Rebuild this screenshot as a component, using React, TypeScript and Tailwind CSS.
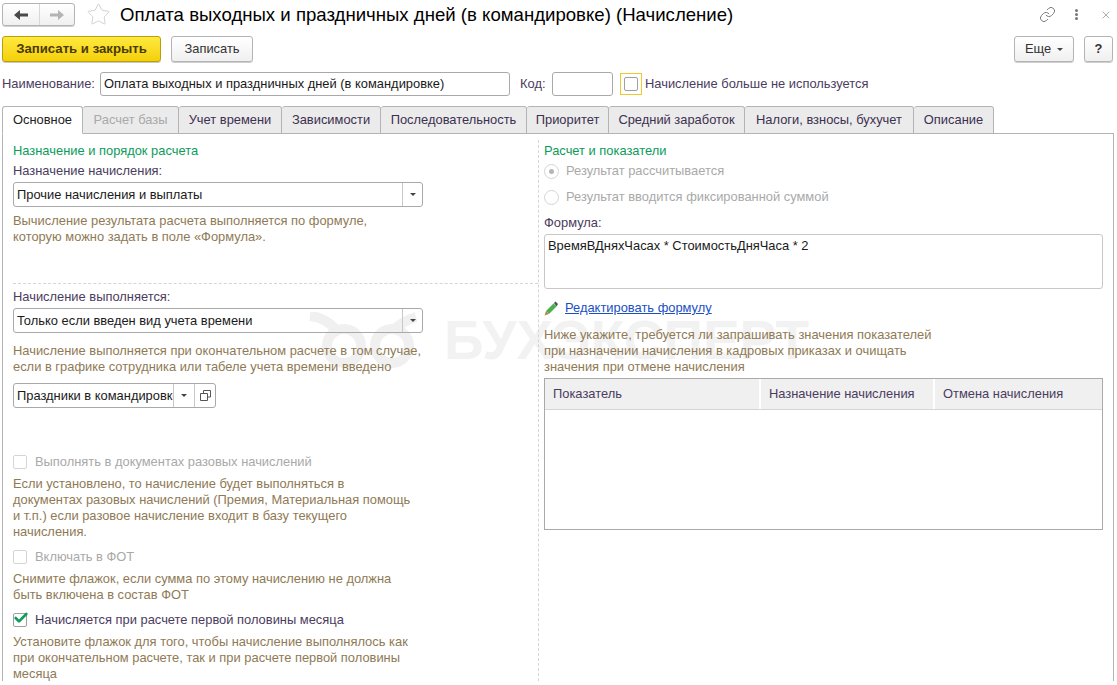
import { Check, Star, Link, X } from "lucide-react";

const tabs = [
  { name: "Основное", width: "w-[81px]", active: true },
  { name: "Расчет базы", width: "w-[96px]", disabled: true },
  { name: "Учет времени", width: "w-[103px]" },
  { name: "Зависимости", width: "w-[99px]" },
  { name: "Последовательность", width: "w-[146px]" },
  { name: "Приоритет", width: "w-[82px]" },
  { name: "Средний заработок", width: "w-[136px]" },
  { name: "Налоги, взносы, бухучет", width: "w-[169px]" },
  { name: "Описание", width: "w-[80px]" },
];

function Caret() {
  return <span className="block h-0 w-0 border-x-[3px] border-t-[3px] border-x-transparent border-t-[#444]" />;
}

function Hint({ children, className = "" }: { children: React.ReactNode; className?: string }) {
  return <p className={`leading-[16px] text-[#8f7a55] ${className}`}>{children}</p>;
}

function Label({ children, className = "" }: { children: React.ReactNode; className?: string }) {
  return <div className={`leading-[16px] text-[#4b3c5e] ${className}`}>{children}</div>;
}

function Select({ value, className = "" }: { value: string; className?: string }) {
  return (
    <div className={`flex h-[25px] w-[410px] items-center rounded-[3px] border border-[#a9a9a9] ${className}`}>
      <span className="flex-1 pl-[3px] text-[#1a1a1a]">{value}</span>
      <span className="flex h-full w-[20px] items-center justify-center border-l border-[#c8c8c8]">
        <Caret />
      </span>
    </div>
  );
}

function Checkbox({ disabled, checked, label, className = "" }: { disabled?: boolean; checked?: boolean; label: string; className?: string }) {
  return (
    <div className={`flex h-[16px] items-center ${className}`}>
      <span className={`relative mr-[8px] block h-[14px] w-[14px] rounded-[2px] border ${disabled ? "border-[#d5d5d5]" : "border-[#a0a0a0]"}`}>
        {checked && <Check className="absolute left-[-1px] top-[-4px] h-[16px] w-[16px] text-[#0f9d58]" strokeWidth={4} />}
      </span>
      <span className={disabled ? "text-[#a9a9a9]" : "text-[#4b3c5e]"}>{label}</span>
    </div>
  );
}

function Radio({ selected, label, className = "" }: { selected?: boolean; label: string; className?: string }) {
  return (
    <div className={`flex h-[16px] items-center ${className}`}>
      <span className="mr-[7px] flex h-[15px] w-[15px] items-center justify-center rounded-full border border-[#d5d5d5]">
        {selected && <span className="block h-[5px] w-[5px] rounded-full bg-[#b5b5b5]" />}
      </span>
      <span className="text-[#a9a9a9]">{label}</span>
    </div>
  );
}

const buttonClass =
  "flex h-[26px] items-center justify-center rounded-[3px] border border-[#b4b4b4] bg-gradient-to-b from-white to-[#f0f0f0] text-[#333] shadow-[0_1px_0_#d0d0d0]";

export default function App() {
  return (
    <div className="relative h-[685px] w-[1117px] overflow-hidden bg-white font-['Liberation_Sans',Arial,sans-serif] text-[12.9px]">
      {/* Watermark, sits under the form */}
      <div className="pointer-events-none absolute left-[308px] top-[312px] flex items-center text-[55px] font-bold leading-none text-[#f2f2f2]">
        <svg width="136" height="56" viewBox="0 0 136 56" fill="none" stroke="#f0f0f0" strokeWidth="10">
          <path d="M2 4c12 1 20 6 28 16M84 20c6-7 14-12 24-15" />
          <circle cx="36" cy="34" r="17" />
          <circle cx="84" cy="34" r="17" />
        </svg>
        <span>БУХЭКСПЕРТ</span>
      </div>

      {/* Title */}
      <div className="relative flex h-[27px] items-center pl-[2px] pt-[2px]">
        <div className="flex h-[23px] w-[73px] rounded-[3px] border border-[#b4b4b4] bg-gradient-to-b from-white to-[#f0f0f0] shadow-[0_1px_0_#d0d0d0]">
          <span className="flex w-[37px] items-center justify-center border-r border-[#d8d8d8]">
            <svg width="14" height="10" viewBox="0 0 14 10" fill="#4a4a4a">
              <path d="M0 5l6-5v3.500h8v3H6V10z" />
            </svg>
          </span>
          <span className="flex flex-1 items-center justify-center">
            <svg width="14" height="10" viewBox="0 0 14 10" fill="#b4b4b4">
              <path d="M14 5L8 0v3.500H0v3h8V10z" />
            </svg>
          </span>
        </div>
        <Star className="ml-[11px] h-[25px] w-[25px] text-[#cfcfcf]" strokeWidth={0.9} />
        <h1 className="ml-[9px] text-[18.6px] text-black">Оплата выходных и праздничных дней (в командировке) (Начисление)</h1>
        <div className="ml-auto flex items-center pr-[5px]">
          <Link className="h-[17px] w-[17px] text-[#666]" strokeWidth={1.2} />
          <span className="ml-[19px] flex flex-col gap-[1px]">
            <i className="block h-[3px] w-[3px] rounded-full bg-[#777]" />
            <i className="block h-[3px] w-[3px] rounded-full bg-[#777]" />
            <i className="block h-[3px] w-[3px] rounded-full bg-[#777]" />
          </span>
          <X className="ml-[22px] h-[12px] w-[12px] text-[#777]" strokeWidth={1.2} />
        </div>
      </div>

      {/* Command bar */}
      <div className="relative mt-[9px] flex px-[2px]">
        <button className="flex h-[26px] w-[159px] items-center justify-center rounded-[3px] border border-[#b89f12] bg-gradient-to-b from-[#ffe93b] to-[#f5d000] text-[13.2px] font-bold text-[#4a3b00] shadow-[0_1px_0_#c9c9c9]">
          Записать и закрыть
        </button>
        <button className={`${buttonClass} ml-[10px] w-[82px]`}>Записать</button>
        <button className={`${buttonClass} ml-auto w-[60px] gap-[6px]`}>
          Еще <Caret />
        </button>
        <button className={`${buttonClass} ml-[10px] mr-[2px] w-[29px] font-bold`}>?</button>
      </div>

      {/* Name row */}
      <div className="relative mt-[10px] flex h-[24px] items-center pl-[2px] text-[#4b3c5e]">
        <span className="w-[98px]">Наименование:</span>
        <div className="flex h-[24px] w-[410px] items-center rounded-[3px] border border-[#a9a9a9] pl-[3px] text-[#1a1a1a]">
          Оплата выходных и праздничных дней (в командировке)
        </div>
        <span className="ml-[10px] w-[32px]">Код:</span>
        <div className="h-[24px] w-[61px] rounded-[3px] border border-[#a9a9a9]" />
        <div className="ml-[7px] flex h-[22px] w-[22px] items-center justify-center border border-[#f0c92a]">
          <span className="block h-[14px] w-[14px] rounded-[2px] border border-[#a0a0a0]" />
        </div>
        <span className="ml-[3px]">Начисление больше не используется</span>
      </div>

      {/* Tabs */}
      <div className="relative z-10 mt-[10px] flex h-[28px] pl-[2px]">
        {tabs.map((tab) => (
          <div
            key={tab.name}
            className={`flex items-center justify-center rounded-t-[3px] border border-l-0 border-[#b4b4b4] first:border-l ${tab.width} ${
              tab.active ? "border-b-white bg-white text-[#222]" : "bg-[#ebebeb]"
            } ${tab.disabled ? "text-[#a9a9a9]" : tab.active ? "" : "text-[#3c3050]"}`}
          >
            {tab.name}
          </div>
        ))}
      </div>

      {/* Panel */}
      <div className="relative -mt-px ml-[2px] flex h-[548px] w-[1112px] border-x border-t border-[#b4b4b4]">
        {/* Left column */}
        <div className="w-[535px] pl-[10px] pt-[9px]">
          <div className="leading-[16px] text-[#0a9c5a]">Назначение и порядок расчета</div>
          <Label className="mt-[4px]">Назначение начисления:</Label>
          <Select value="Прочие начисления и выплаты" className="mt-[3px]" />
          <Hint className="mt-[6px]">
            Вычисление результата расчета выполняется по формуле,
            <br />
            которую можно задать в поле «Формула».
          </Hint>
          <div className="mt-[38px] border-t border-dashed border-[#d5d5d5]" />
          <Label className="mt-[5px]">Начисление выполняется:</Label>
          <Select value="Только если введен вид учета времени" className="mt-[3px]" />
          <Hint className="mt-[10px]">
            Начисление выполняется при окончательном расчете в том случае,
            <br />
            если в графике сотрудника или табеле учета времени введено
          </Hint>
          <div className="mt-[8px] flex h-[25px] w-[203px] items-center rounded-[3px] border border-[#a9a9a9]">
            <span className="w-[159px] overflow-hidden whitespace-nowrap pl-[3px] text-[#1a1a1a]">Праздники в командировке</span>
            <span className="flex h-full w-[21px] items-center justify-center border-l border-[#c8c8c8]">
              <Caret />
            </span>
            <span className="flex h-full flex-1 items-center justify-center border-l border-[#c8c8c8]">
              <svg width="11" height="11" viewBox="0 0 11 11" fill="none" stroke="#555">
                <path d="M3.500 3V.5h7v6.500H8M.5 3.500h7v7h-7z" />
              </svg>
            </span>
          </div>
          <Checkbox disabled label="Выполнять в документах разовых начислений" className="mt-[46px]" />
          <Hint className="mt-[6px] w-[410px]">
            Если установлено, то начисление будет выполняться в
            <br />
            документах разовых начислений (Премия, Материальная помощь
            <br />
            и т.п.) если разовое начисление входит в базу текущего
            <br />
            начисления.
          </Hint>
          <Checkbox disabled label="Включать в ФОТ" className="mt-[9px]" />
          <Hint className="mt-[6px]">
            Снимите флажок, если сумма по этому начислению не должна
            <br />
            быть включена в состав ФОТ
          </Hint>
          <Checkbox checked label="Начисляется при расчете первой половины месяца" className="mt-[9px]" />
          <Hint className="mt-[6px]">
            Установите флажок для того, чтобы начисление выполнялось как
            <br />
            при окончательном расчете, так и при расчете первой половины
            <br />
            месяца
          </Hint>
        </div>

        {/* Right column */}
        <div className="mt-[6px] flex-1 border-l border-dashed border-[#d5d5d5] pl-[5px] pr-[10px] pt-[3px]">
          <div className="leading-[16px] text-[#0a9c5a]">Расчет и показатели</div>
          <Radio selected label="Результат рассчитывается" className="mt-[4px]" />
          <Radio label="Результат вводится фиксированной суммой" className="mt-[10px]" />
          <Label className="mt-[10px]">Формула:</Label>
          <div className="mt-[3px] h-[55px] rounded-[3px] border border-[#c8c8c8] px-[3px] py-[3px] leading-[16px] text-[#1a1a1a]">
            ВремяВДняхЧасах * СтоимостьДняЧаса * 2
          </div>
          <div className="mt-[11px] flex h-[16px] items-center">
            <svg width="14" height="15" viewBox="0 0 14 15" className="mr-[7px]">
              <path d="M9.500 2.500l3 3-7.500 7.500-3-3z" fill="#4caf50" />
              <path d="M10 2l1.500-1.500 2.500 2.500-1.500 2.500z" fill="#3f5a44" />
              <path d="M2 10l3 3-4.500 1.500z" fill="#b08a50" />
            </svg>
            <a className="text-[#1a4fc4] underline">Редактировать формулу</a>
          </div>
          <Hint className="mt-[11px]">
            Ниже укажите, требуется ли запрашивать значения показателей
            <br />
            при назначении начисления в кадровых приказах и очищать
            <br />
            значения при отмене начисления
          </Hint>
          <div className="mt-[3px] h-[152px] border border-[#a9a9a9]">
            <div className="flex h-[31px] border-b border-[#d5d5d5] bg-[#f0f0f0] text-[#4b3c5e]">
              <span className="flex w-[216px] items-center border-r-2 border-white pl-[8px]">Показатель</span>
              <span className="flex w-[174px] items-center border-r-2 border-white pl-[8px]">Назначение начисления</span>
              <span className="flex flex-1 items-center pl-[8px]">Отмена начисления</span>
            </div>
          </div>
        </div>
      </div>
    </div>
  );
}
